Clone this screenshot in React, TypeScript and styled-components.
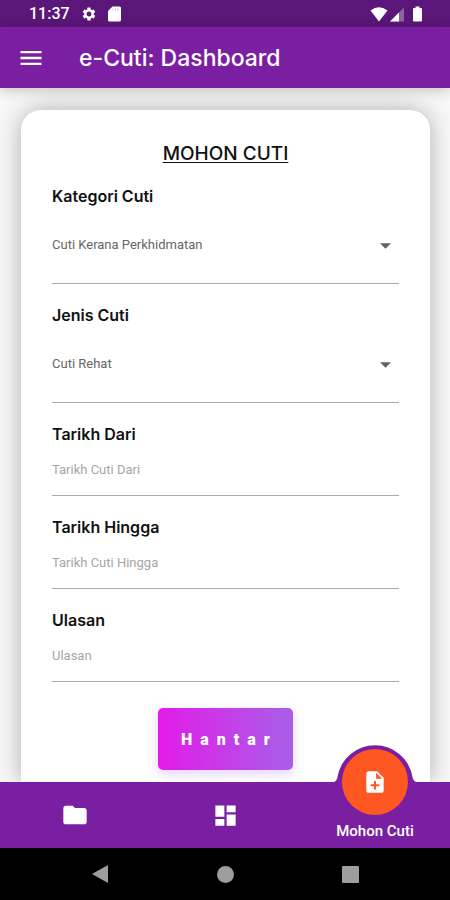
import React from "react";
import styled, { createGlobalStyle } from "styled-components";
import { MdMenu, MdFolder, MdDashboard, MdNoteAdd, MdSettings } from "react-icons/md";

const GlobalStyle = createGlobalStyle`
  * { box-sizing: border-box; }
  body { margin: 0; font-family: Roboto, sans-serif; background: #f8f8f8; }
  button, input, select { font-family: inherit; margin: 0; }
`;

const Screen = styled.div`
  display: flex;
  flex-direction: column;
  min-height: 100vh;
`;

const StatusBar = styled.div`
  display: flex;
  align-items: center;
  justify-content: space-between;
  height: 27px;
  padding: 1px 27px 0 29px;
  background: #5a1678;
  color: #fff;
`;

const StatusGroup = styled.div<{ $gap: number }>`
  display: flex;
  align-items: center;
  gap: ${(p) => p.$gap}px;
`;

const Clock = styled.time`
  font-size: 16px;
  line-height: 20px;
  font-weight: 500;
`;

const AppBar = styled.header`
  display: flex;
  align-items: center;
  gap: 34px;
  height: 61px;
  padding: 0 17px;
  background: #7b1fa2;
  color: #fff;
  box-shadow: 0 3px 12px rgba(0, 0, 0, 0.2);
  z-index: 1;
`;

const IconButton = styled.button`
  display: flex;
  padding: 0;
  border: 0;
  background: none;
  color: inherit;
  cursor: pointer;
`;

const AppTitle = styled.h1`
  margin: 0;
  font: 500 23px/28px Inter, sans-serif;
`;

const Content = styled.main`
  flex: 1;
  display: flex;
  flex-direction: column;
  padding: 22px 20px 0 21px;
  overflow: hidden;
`;

const Card = styled.form`
  flex: 1;
  display: flex;
  flex-direction: column;
  padding: 32px 31px 12px;
  border-radius: 20px 20px 0 0;
  background: #fff;
  box-shadow: 0 0 24px rgba(0, 0, 0, 0.3);
`;

const CardTitle = styled.h2`
  margin: 0 0 18px;
  text-align: center;
  color: #111;
  font: 500 19px/24px Inter, sans-serif;
  text-decoration: underline;
  text-decoration-thickness: 1px;
  text-underline-offset: 2px;
`;

const Field = styled.div`
  display: flex;
  flex-direction: column;
  margin-bottom: 19px;
`;

const Label = styled.label`
  color: #111;
  font: 600 16px/24px Inter, sans-serif;
`;

const SelectBox = styled.div`
  display: grid;
  align-items: center;
  border-bottom: 1px solid #aaa;

  > * { grid-area: 1 / 1; }
  > svg { justify-self: end; margin-right: 8px; pointer-events: none; }
`;

const Select = styled.select`
  appearance: none;
  width: 100%;
  height: 75px;
  padding: 0 0 2px;
  border: 0;
  background: transparent;
  color: #666;
  font-size: 13px;
`;

const TextInput = styled.input`
  width: 100%;
  height: 50px;
  padding: 0 0 2px;
  border: 0;
  border-bottom: 1px solid #aaa;
  border-radius: 0;
  background: transparent;
  color: #666;
  font-size: 13px;

  &::placeholder { color: #a6a6a6; opacity: 1; }
`;

const Submit = styled.button`
  align-self: center;
  height: 62px;
  margin-top: 7px;
  padding: 0 15px 0 23px;
  border: 0;
  border-radius: 5px;
  background: linear-gradient(90deg, #e31be8, #a85fe8);
  box-shadow: 0 4px 12px rgba(150, 80, 230, 0.25);
  color: #fff;
  font-size: 16px;
  font-weight: 900;
  letter-spacing: 8px;
  cursor: pointer;
`;

const TabBar = styled.nav`
  display: grid;
  grid-template-columns: repeat(3, 1fr);
  height: 66px;
  background: #7b1fa2;
  color: #fff;
  z-index: 1;
`;

const Tab = styled.button`
  position: relative;
  display: flex;
  align-items: center;
  justify-content: center;
  padding: 0;
  border: 0;
  background: none;
  color: inherit;
  cursor: pointer;
`;

const TabLabel = styled.span`
  align-self: flex-end;
  margin-bottom: 7px;
  font-size: 15px;
  line-height: 20px;
  font-weight: 500;
`;

const Bump = styled.svg`
  position: absolute;
  bottom: 100%;
  left: 50%;
  margin: 0 0 -1px -46px;
`;

const Bubble = styled.span`
  position: absolute;
  top: -33px;
  left: 50%;
  display: flex;
  align-items: center;
  justify-content: center;
  width: 66px;
  height: 66px;
  margin-left: -33px;
  border-radius: 50%;
  background: #ff5722;
`;

const SystemBar = styled.div`
  display: grid;
  grid-template-columns: repeat(3, 125px);
  justify-content: center;
  justify-items: center;
  align-items: center;
  height: 52px;
  background: #000;
  color: #9e9e9e;
`;

const choices = [
  { id: "kategori", label: "Kategori Cuti", value: "Cuti Kerana Perkhidmatan" },
  { id: "jenis", label: "Jenis Cuti", value: "Cuti Rehat" },
];

const entries = [
  { id: "dari", label: "Tarikh Dari", hint: "Tarikh Cuti Dari" },
  { id: "hingga", label: "Tarikh Hingga", hint: "Tarikh Cuti Hingga" },
  { id: "ulasan", label: "Ulasan", hint: "Ulasan" },
];

export default function App() {
  return (
    <Screen>
      <GlobalStyle />
      <StatusBar>
        <StatusGroup $gap={11}>
          <Clock>11:37</Clock>
          <MdSettings size={16} />
          <svg width="13" height="16" viewBox="0 0 13 16">
            <path d="M4.5 0.5H11.5Q13 0.5 13 2V14Q13 15.5 11.5 15.5H1.5Q0 15.5 0 14V5Z" fill="#fff" />
            <path d="M5 2.5V4.5M7.5 2.5V4.5M10 2.5V4.5" stroke="#c9b4d4" />
          </svg>
        </StatusGroup>
        <StatusGroup $gap={2}>
          <svg width="18" height="15" viewBox="0 0 18 15">
            <path d="M0.5 3.5Q9 -3 17.5 3.5L9 14.5Z" fill="#fff" />
          </svg>
          <svg width="14" height="15" viewBox="0 0 14 15">
            <path d="M14 0.5V14.5H0Z" fill="#8f62a5" />
            <path d="M9 5.5V14.5H0Z" fill="#fff" />
          </svg>
          <svg width="17" height="16" viewBox="0 0 17 16">
            <path d="M9.500 0.500H13.500V2H15Q16 2 16 3V14.500Q16 15.500 15 15.500H8Q7 15.500 7 14.500V3Q7 2 8 2H9.500Z" fill="#fff" />
          </svg>
        </StatusGroup>
      </StatusBar>
      <AppBar>
        <IconButton aria-label="Menu">
          <MdMenu size={28} />
        </IconButton>
        <AppTitle>e-Cuti: Dashboard</AppTitle>
      </AppBar>
      <Content>
        <Card onSubmit={(e: React.FormEvent) => e.preventDefault()}>
          <CardTitle>MOHON CUTI</CardTitle>
          {choices.map((c) => (
            <Field key={c.id}>
              <Label htmlFor={c.id}>{c.label}</Label>
              <SelectBox>
                <Select id={c.id}>
                  <option>{c.value}</option>
                </Select>
                <svg width="11" height="6" viewBox="0 0 11 6">
                  <path d="M0 0.300H11L5.500 5.800Z" fill="#616161" />
                </svg>
              </SelectBox>
            </Field>
          ))}
          {entries.map((f) => (
            <Field key={f.id}>
              <Label htmlFor={f.id}>{f.label}</Label>
              <TextInput id={f.id} type="text" placeholder={f.hint} />
            </Field>
          ))}
          <Submit type="submit">Hantar</Submit>
        </Card>
      </Content>
      <TabBar>
        <Tab aria-label="Folder">
          <MdFolder size={28} />
        </Tab>
        <Tab aria-label="Dashboard">
          <MdDashboard size={27} />
        </Tab>
        <Tab>
          <Bump width="92" height="40" viewBox="0 0 92 40">
            <path d="M2 40Q8 39 8.500 34A38 38 0 0 1 83.500 34Q84 39 90 40Z" fill="#7b1fa2" />
          </Bump>
          <Bubble>
            <MdNoteAdd size={26} />
          </Bubble>
          <TabLabel>Mohon Cuti</TabLabel>
        </Tab>
      </TabBar>
      <SystemBar>
        <svg width="16" height="18" viewBox="0 0 16 18">
          <path d="M16 0V18L0 9Z" fill="currentColor" />
        </svg>
        <svg width="17" height="17" viewBox="0 0 17 17">
          <circle cx="8.500" cy="8.500" r="8.500" fill="currentColor" />
        </svg>
        <svg width="17" height="17" viewBox="0 0 17 17">
          <rect width="17" height="17" rx="1" fill="currentColor" />
        </svg>
      </SystemBar>
    </Screen>
  );
}
